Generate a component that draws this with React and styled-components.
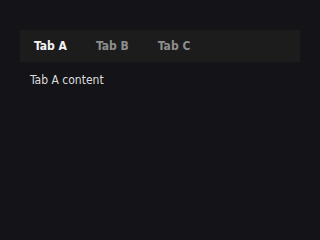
import React, { useState } from "react";
import styled, { createGlobalStyle } from "styled-components";

const Global = createGlobalStyle`
  html, body { margin: 0; padding: 0; background: #131318; }
  body { font-family: "DejaVu Sans Condensed", "DejaVu Sans", sans-serif; }
`;

const Page = styled.div`
  padding: 30px 20px;
  min-height: 240px;
  box-sizing: border-box;
  background: #131318;
`;

const TabBar = styled.div`
  display: flex;
  gap: 0;
  height: 32px;
  background: #1c1c1d;
`;

const Tab = styled.button`
  border: none;
  background: transparent;
  font-family: "DejaVu Sans Condensed", "DejaVu Sans", sans-serif;
  font-size: 12px;
  font-weight: 700;
  padding: 0 14px;
  margin-right: 1px;
  color: ${(p) => (p.$active ? "#f4f4f4" : "#8e8e8e")};
  cursor: pointer;
`;

const Content = styled.div`
  padding: 10px 10px;
  font-size: 12px;
  line-height: 16px;
  color: #dcdcdc;
`;

export default function App() {
  const [tab, setTab] = useState("A");
  return (
    <>
      <Global />
      <Page>
        <TabBar>
          {["A", "B", "C"].map((t) => (
            <Tab key={t} $active={tab === t} onClick={() => setTab(t)}>
              Tab {t}
            </Tab>
          ))}
        </TabBar>
        <Content>Tab {tab} content</Content>
      </Page>
    </>
  );
}
